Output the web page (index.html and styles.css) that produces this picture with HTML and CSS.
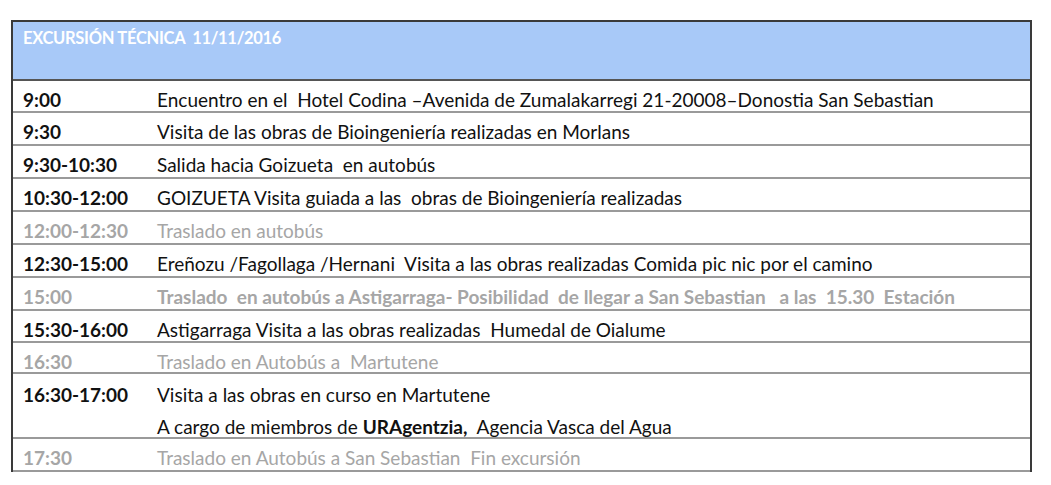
FILE: index.html
```html
<!DOCTYPE html>
<html lang="es">
<head>
<meta charset="utf-8">
<title>Excursión técnica</title>
<link rel="stylesheet" href="styles.css">
</head>
<body>
<div class="sheet">
  <div class="head">EXCURSIÓN TÉCNICA&nbsp; 11/11/2016</div>
  <div class="row h32"><span class="time">9:00</span><span class="desc">Encuentro en el&nbsp; Hotel Codina –Avenida de Zumalakarregi 21-20008–Donostia San Sebastian</span></div>
  <div class="row"><span class="time">9:30</span><span class="desc">Visita de las obras de Bioingeniería realizadas en Morlans</span></div>
  <div class="row"><span class="time">9:30-10:30</span><span class="desc">Salida hacia Goizueta&nbsp; en autobús</span></div>
  <div class="row"><span class="time">10:30-12:00</span><span class="desc">GOIZUETA Visita guiada a las&nbsp; obras de Bioingeniería realizadas</span></div>
  <div class="row muted"><span class="time">12:00-12:30</span><span class="desc">Traslado en autobús</span></div>
  <div class="row"><span class="time">12:30-15:00</span><span class="desc">Ereñozu /Fagollaga /Hernani&nbsp; Visita a las obras realizadas Comida pic nic por el camino</span></div>
  <div class="row muted strong"><span class="time">15:00</span><span class="desc">Traslado&nbsp; en autobús a Astigarraga- Posibilidad&nbsp; de llegar a San Sebastian&nbsp;&nbsp; a las&nbsp; 15.30&nbsp; Estación</span></div>
  <div class="row h32"><span class="time">15:30-16:00</span><span class="desc">Astigarraga Visita a las obras realizadas&nbsp; Humedal de Oialume</span></div>
  <div class="row muted h31"><span class="time">16:30</span><span class="desc">Traslado en Autobús a&nbsp; Martutene</span></div>
  <div class="row double"><span class="time">16:30-17:00</span><span class="desc">Visita a las obras en curso en Martutene<br>A cargo de miembros de <b>URAgentzia,</b>&nbsp; Agencia Vasca del Agua</span></div>
  <div class="row muted last"><span class="time">17:30</span><span class="desc">Traslado en Autobús a San Sebastian&nbsp; Fin excursión</span></div>
</div>
</body>
</html>
```
FILE: styles.css
```css
html, body {
  margin: 0;
  padding: 0;
  background: #ffffff;
}
body {
  font-family: Lato, "Open Sans", sans-serif;
  color: #111;
}
.sheet {
  margin: 20px 0 0 11px;
  width: 1021px;
  border-left: 2px solid #3a3a3a;
  border-right: 2px solid #3a3a3a;
  box-sizing: border-box;
}
.head {
  height: 61px;
  background: #a8c9f8;
  border-top: 2px solid #3a3a3a;
  border-bottom: 2px solid #555;
  box-sizing: border-box;
  color: #fff;
  font-weight: 700;
  font-size: 16.5px;
  line-height: 20px;
  padding: 6px 0 0 10px;
  letter-spacing: -0.3px;
}
.row {
  display: grid;
  grid-template-columns: 134px 1fr;
  padding-left: 10px;
  height: 33px;
  box-sizing: border-box;
  border-bottom: 2px solid #9a9a9a;
  font-size: 19px;
  line-height: 31px;
  padding-top: 3px;
}
.h32 { height: 32px; }
.h31 { height: 31px; }
.time { font-weight: 700; color: #111; }
.desc { color: #111; }
.muted .time, .muted .desc { color: #a6a6a6; }
.strong .desc { font-weight: 700; }
.double {
  height: 65px;
  line-height: 32px;
  padding-top: 5px;
}
.double b { font-weight: 700; }
.last { height: 33px; padding-top: 5px; line-height: 27px; }
```
